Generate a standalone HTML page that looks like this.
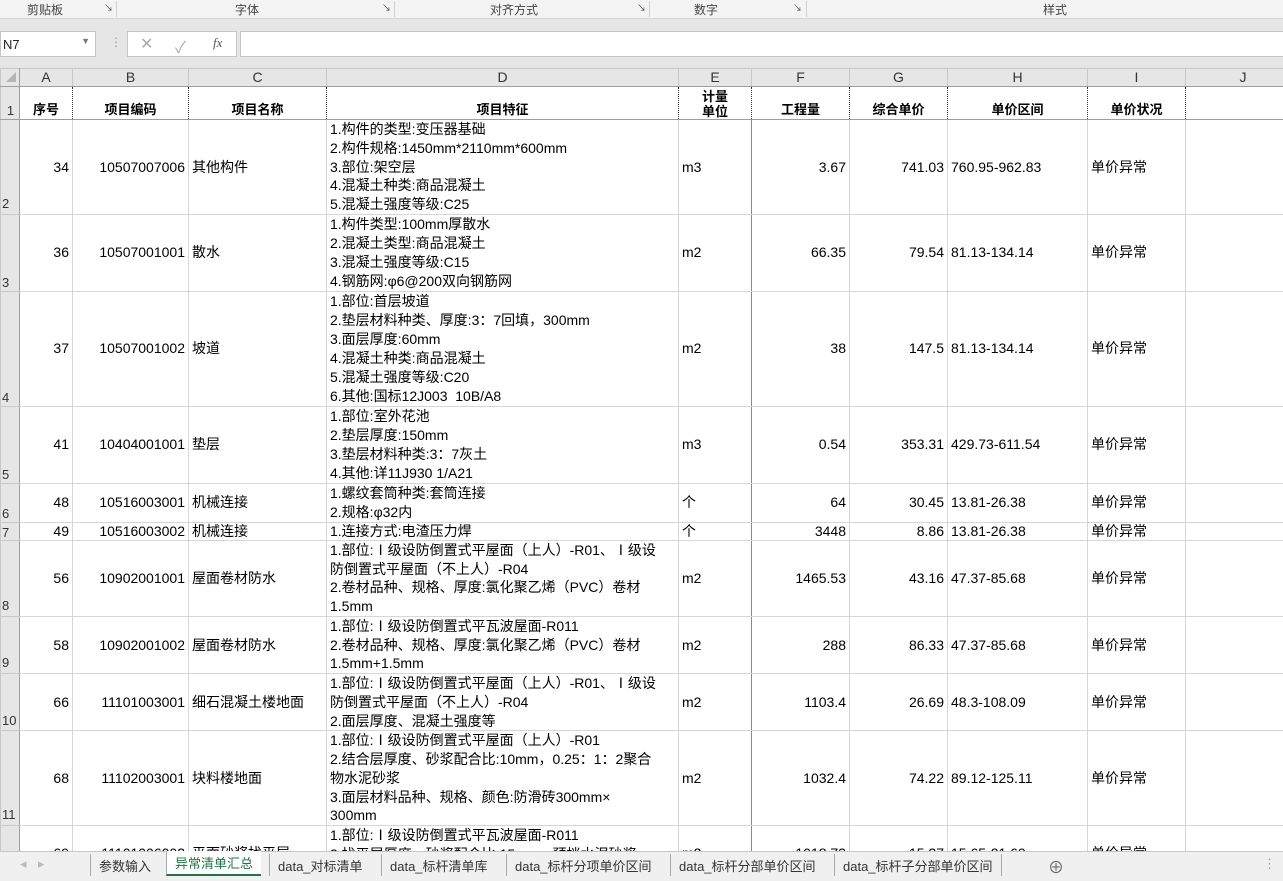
<!DOCTYPE html>
<html><head><meta charset="utf-8">
<style>
*{box-sizing:border-box;margin:0;padding:0}
html,body{width:1283px;height:881px;overflow:hidden}
body{background:#fff;font-family:"Liberation Sans","Noto Sans CJK SC",sans-serif;font-size:14px;color:#000;position:relative}
.rib{position:absolute;left:0;top:0;width:1283px;height:19px;background:#f3f3f3;border-bottom:1px solid #d6d6d6;font-size:12px;color:#444}
.rib span{position:absolute;top:1px}
.rib i{position:absolute;top:1px;height:16px;border-left:1px solid #d0d0d0}
.band{position:absolute;left:0;top:19px;width:1283px;height:49px;background:#e6e6e6}
.nb{position:absolute;left:0;top:31px;width:96px;height:26px;background:#fff;border:1px solid #c6c6c6;font-size:13px;padding:5px 2px;color:#222}
.fx{position:absolute;left:127px;top:31px;width:110px;height:26px;background:#fff;border:1px solid #c6c6c6;color:#aaa}
.fb{position:absolute;left:240px;top:31px;width:1043px;height:26px;background:#fff;border:1px solid #c6c6c6;border-right:none}
table{position:absolute;left:0;top:68px;border-collapse:collapse;table-layout:fixed;width:1300px}
td{border:1px solid #d6d6d6;overflow:hidden;white-space:nowrap;padding:0 3px;line-height:19px;vertical-align:middle}
tr.ch td{background:#e6e6e6;text-align:center;font-size:14px;color:#333;border-color:#c8c8c8;border-bottom:1px solid #9e9e9e;height:18px;line-height:17px}
td.rh{background:#e6e6e6;border-color:#c8c8c8;border-right:1px solid #9e9e9e;vertical-align:bottom;text-align:left;padding:0 0 0 1px;font-size:13px;color:#333;line-height:16px}
tr.h td{font-weight:bold;text-align:center;vertical-align:bottom;font-size:13px;border-left:1px dotted #333;border-right:1px dotted #333;border-bottom:1px solid #9e9e9e}
tr.h td.rh{font-weight:normal;border-left:1px solid #c8c8c8;border-right:1px solid #9e9e9e}
.r{text-align:right}
.d{vertical-align:top}
.t td{line-height:18.75px}
.ef{border-right:1px solid #888!important}
.tabs{position:absolute;z-index:5;left:0;top:851px;width:1283px;height:30px;background:#f0f0f0;border-top:1px solid #c6c6c6;font-size:13px;color:#333}
.tabs span{position:absolute;top:2px;height:22px;padding:2px 8px;border-left:1px solid #aaa}
.tabs .act{background:#fff;color:#217346;border-bottom:2px solid #217346;border-left:1px solid #aaa;top:-1px;height:25px}
</style></head><body>
<div class="rib">
<span style="left:27px">剪贴板</span><span style="left:104px;font-size:9px">↘</span><i style="left:116px"></i>
<span style="left:235px">字体</span><span style="left:382px;font-size:9px">↘</span><i style="left:394px"></i>
<span style="left:490px">对齐方式</span><span style="left:637px;font-size:9px">↘</span><i style="left:649px"></i>
<span style="left:694px">数字</span><span style="left:793px;font-size:9px">↘</span><i style="left:806px"></i>
<span style="left:1043px">样式</span>
</div>
<div class="band"></div>
<div class="nb">N7<span style="position:absolute;right:5px;top:4px;font-size:9px;color:#777">▼</span></div>
<div style="position:absolute;left:110px;top:35px;color:#999;font-size:12px">⋮</div>
<div class="fx"><span style="position:absolute;left:12px;top:2px;font-size:16px">✕</span><span style="position:absolute;left:47px;top:2px;font-size:16px">✓</span><span style="position:absolute;left:85px;top:3px;font-size:13px;font-style:italic;color:#555;font-family:'Liberation Serif',serif">fx</span></div>
<div class="fb"></div>
<table>
<colgroup><col style="width:19px"><col style="width:53px"><col style="width:116px"><col style="width:138px"><col style="width:352px"><col style="width:73px"><col style="width:98px"><col style="width:98px"><col style="width:140px"><col style="width:98px"><col style="width:115px"></colgroup>
<tr class="ch"><td style="border-right:1px solid #9e9e9e"><span style="display:inline-block;width:0;height:0;border-left:10px solid transparent;border-bottom:10px solid #b5b5b5;margin-left:2px"></span></td><td>A</td><td>B</td><td>C</td><td>D</td><td>E</td><td>F</td><td>G</td><td>H</td><td>I</td><td>J</td></tr>
<tr class="h" style="height:33px"><td class="rh">1</td><td>序号</td><td>项目编码</td><td>项目名称</td><td>项目特征</td><td style="line-height:15px">计量<br>单位</td><td>工程量</td><td>综合单价</td><td>单价区间</td><td>单价状况</td><td></td></tr>
<tr class="t" style="height:94px"><td class="rh">2</td><td class="r">34</td><td class="r">10507007006</td><td>其他构件</td><td class="d">1.构件的类型:变压器基础<br>2.构件规格:1450mm*2110mm*600mm<br>3.部位:架空层<br>4.混凝土种类:商品混凝土<br>5.混凝土强度等级:C25</td><td class="ef">m3</td><td class="r">3.67</td><td class="r">741.03</td><td>760.95-962.83</td><td>单价异常</td><td></td></tr>
<tr style="height:75px"><td class="rh">3</td><td class="r">36</td><td class="r">10507001001</td><td>散水</td><td class="d">1.构件类型:100mm厚散水<br>2.混凝土类型:商品混凝土<br>3.混凝土强度等级:C15<br>4.钢筋网:φ6@200双向钢筋网</td><td class="ef">m2</td><td class="r">66.35</td><td class="r">79.54</td><td>81.13-134.14</td><td>单价异常</td><td></td></tr>
<tr style="height:113px"><td class="rh">4</td><td class="r">37</td><td class="r">10507001002</td><td>坡道</td><td class="d">1.部位:首层坡道<br>2.垫层材料种类、厚度:3：7回填，300mm<br>3.面层厚度:60mm<br>4.混凝土种类:商品混凝土<br>5.混凝土强度等级:C20<br>6.其他:国标12J003&nbsp; 10B/A8</td><td class="ef">m2</td><td class="r">38</td><td class="r">147.5</td><td>81.13-134.14</td><td>单价异常</td><td></td></tr>
<tr style="height:75px"><td class="rh">5</td><td class="r">41</td><td class="r">10404001001</td><td>垫层</td><td class="d">1.部位:室外花池<br>2.垫层厚度:150mm<br>3.垫层材料种类:3：7灰土<br>4.其他:详11J930 1/A21</td><td class="ef">m3</td><td class="r">0.54</td><td class="r">353.31</td><td>429.73-611.54</td><td>单价异常</td><td></td></tr>
<tr style="height:37px"><td class="rh">6</td><td class="r">48</td><td class="r">10516003001</td><td>机械连接</td><td class="d">1.螺纹套筒种类:套筒连接<br>2.规格:φ32内</td><td class="ef">个</td><td class="r">64</td><td class="r">30.45</td><td>13.81-26.38</td><td>单价异常</td><td></td></tr>
<tr style="height:18px"><td class="rh" style="line-height:14px">7</td><td class="r" style="line-height:17px">49</td><td class="r" style="line-height:17px">10516003002</td><td style="line-height:17px">机械连接</td><td class="d" style="line-height:17px">1.连接方式:电渣压力焊</td><td class="ef" style="line-height:17px">个</td><td class="r" style="line-height:17px">3448</td><td class="r" style="line-height:17px">8.86</td><td style="line-height:17px">13.81-26.38</td><td style="line-height:17px">单价异常</td><td></td></tr>
<tr class="t" style="height:75px"><td class="rh">8</td><td class="r">56</td><td class="r">10902001001</td><td>屋面卷材防水</td><td class="d">1.部位:Ⅰ级设防倒置式平屋面（上人）-R01、Ⅰ级设<br>防倒置式平屋面（不上人）-R04<br>2.卷材品种、规格、厚度:氯化聚乙烯（PVC）卷材<br>1.5mm</td><td class="ef">m2</td><td class="r">1465.53</td><td class="r">43.16</td><td>47.37-85.68</td><td>单价异常</td><td></td></tr>
<tr class="t" style="height:56px"><td class="rh">9</td><td class="r">58</td><td class="r">10902001002</td><td>屋面卷材防水</td><td class="d">1.部位:Ⅰ级设防倒置式平瓦波屋面-R011<br>2.卷材品种、规格、厚度:氯化聚乙烯（PVC）卷材<br>1.5mm+1.5mm</td><td class="ef">m2</td><td class="r">288</td><td class="r">86.33</td><td>47.37-85.68</td><td>单价异常</td><td></td></tr>
<tr class="t" style="height:56px"><td class="rh">10</td><td class="r">66</td><td class="r">11101003001</td><td>细石混凝土楼地面</td><td class="d">1.部位:Ⅰ级设防倒置式平屋面（上人）-R01、Ⅰ级设<br>防倒置式平屋面（不上人）-R04<br>2.面层厚度、混凝土强度等</td><td class="ef">m2</td><td class="r">1103.4</td><td class="r">26.69</td><td>48.3-108.09</td><td>单价异常</td><td></td></tr>
<tr class="t" style="height:94px"><td class="rh">11</td><td class="r">68</td><td class="r">11102003001</td><td>块料楼地面</td><td class="d">1.部位:Ⅰ级设防倒置式平屋面（上人）-R01<br>2.结合层厚度、砂浆配合比:10mm，0.25：1：2聚合<br>物水泥砂浆<br>3.面层材料品种、规格、颜色:防滑砖300mm×<br>300mm</td><td class="ef">m2</td><td class="r">1032.4</td><td class="r">74.22</td><td>89.12-125.11</td><td>单价异常</td><td></td></tr>
<tr style="height:56px"><td class="rh">12</td><td class="r">69</td><td class="r">11101006002</td><td>平面砂浆找平层</td><td class="d">1.部位:Ⅰ级设防倒置式平瓦波屋面-R011<br>2.找平层厚度、砂浆配合比:15mm，预拌水泥砂浆</td><td class="ef">m2</td><td class="r">1018.73</td><td class="r">15.27</td><td>15.65-21.69</td><td>单价异常</td><td></td></tr>
</table>
<div class="tabs">
<span style="left:12px;border:none;color:#bbb">◂</span><span style="left:30px;border:none;color:#bbb">▸</span>
<span style="left:90px">参数输入</span>
<span class="act" style="left:166px">异常清单汇总</span>
<span style="left:269px">data_对标清单</span>
<span style="left:381px">data_标杆清单库</span>
<span style="left:506px">data_标杆分项单价区间</span>
<span style="left:670px">data_标杆分部单价区间</span>
<span style="left:834px;border-right:1px solid #aaa">data_标杆子分部单价区间</span>
<span style="left:1040px;border:none;font-size:16px;top:0;color:#666">⊕</span>
<span style="left:1255px;border:none;color:#999">⋮</span>
</div>
</body></html>
